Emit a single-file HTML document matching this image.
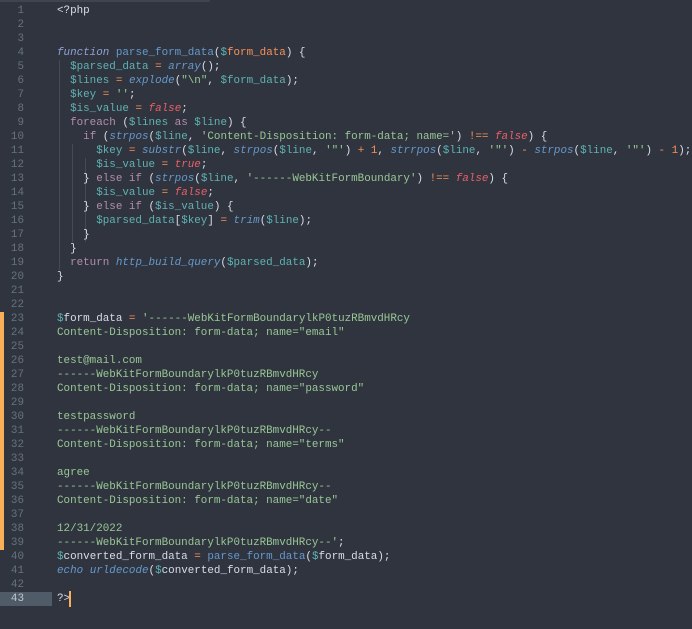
<!DOCTYPE html><html><head><style>
body{margin:0;width:692px;height:629px;overflow:hidden;background:#2f343f;font-family:"Liberation Mono",monospace;font-size:10.9px;color:#d8dee9}
.top{position:absolute;left:0;top:0;width:210px;height:2px;background:#3e4450}
.g{position:absolute;left:0;top:4px;width:40px}
.g div{height:14px;line-height:14px;text-align:right;padding-right:8px;color:#65737e;width:24px}
.c{position:absolute;left:57px;top:4px;width:635px;overflow:hidden}
.c div{height:14px;line-height:14px;white-space:pre}
.k{color:#b48ead}.f{color:#6699cc}.i{font-style:italic}.v{color:#5fb3b3}.s{color:#99c794}.o{color:#f99157}.r{color:#ec5f67;font-style:italic}
.bar{position:absolute;left:0;top:312px;width:4px;height:238px;background:#f9ae58}
.hl{position:absolute;left:0;top:592px;width:52px;height:14px;background:#4f5b66}
.cur{position:absolute;left:69px;top:591px;width:2px;height:16px;background:#f9ae58}
.ig{position:absolute;width:1px;background:#454b56}
</style></head><body>
<div class="top"></div><div class="bar"></div><div class="hl"></div>
<div class="ig" style="left:59px;top:60px;height:210px"></div>
<div class="ig" style="left:72px;top:144px;height:98px"></div>
<div class="ig" style="left:85px;top:158px;height:84px"></div>
<div class="g">
<div>1</div><div>2</div><div>3</div><div>4</div><div>5</div><div>6</div><div>7</div><div>8</div><div>9</div><div>10</div><div>11</div><div>12</div><div>13</div><div>14</div><div>15</div><div>16</div><div>17</div><div>18</div><div>19</div><div>20</div><div>21</div><div>22</div><div>23</div><div>24</div><div>25</div><div>26</div><div>27</div><div>28</div><div>29</div><div>30</div><div>31</div><div>32</div><div>33</div><div>34</div><div>35</div><div>36</div><div>37</div><div>38</div><div>39</div><div>40</div><div>41</div><div>42</div><div style="color:#c0c5ce">43</div>
</div>
<div class="c">
<div>&lt;?php</div><div></div><div></div>
<div><span class="f i" style="color:#8fa1d4">function</span> <span class="f">parse_form_data</span>(<span class="v">$</span><span class="o">form_data</span>) {</div>
<div>  <span class="v">$parsed_data</span> <span class="o">=</span> <span class="f i">array</span>();</div>
<div>  <span class="v">$lines</span> <span class="o">=</span> <span class="f i">explode</span>(<span class="s">"\n"</span>, <span class="v">$form_data</span>);</div>
<div>  <span class="v">$key</span> <span class="o">=</span> <span class="s">''</span>;</div>
<div>  <span class="v">$is_value</span> <span class="o">=</span> <span class="r">false</span>;</div>
<div>  <span class="k">foreach</span> (<span class="v">$lines</span> <span class="k">as</span> <span class="v">$line</span>) {</div>
<div>    <span class="k">if</span> (<span class="f i">strpos</span>(<span class="v">$line</span>, <span class="s">'Content-Disposition: form-data; name='</span>) <span class="o">!==</span> <span class="r">false</span>) {</div>
<div>      <span class="v">$key</span> <span class="o">=</span> <span class="f i">substr</span>(<span class="v">$line</span>, <span class="f i">strpos</span>(<span class="v">$line</span>, <span class="s">'"'</span>) <span class="o">+</span> <span class="o">1</span>, <span class="f i">strrpos</span>(<span class="v">$line</span>, <span class="s">'"'</span>) <span class="o">-</span> <span class="f i">strpos</span>(<span class="v">$line</span>, <span class="s">'"'</span>) <span class="o">-</span> <span class="o">1</span>);</div>
<div>      <span class="v">$is_value</span> <span class="o">=</span> <span class="r">true</span>;</div>
<div>    } <span class="k">else if</span> (<span class="f i">strpos</span>(<span class="v">$line</span>, <span class="s">'------WebKitFormBoundary'</span>) <span class="o">!==</span> <span class="r">false</span>) {</div>
<div>      <span class="v">$is_value</span> <span class="o">=</span> <span class="r">false</span>;</div>
<div>    } <span class="k">else if</span> (<span class="v">$is_value</span>) {</div>
<div>      <span class="v">$parsed_data</span>[<span class="v">$key</span>] <span class="o">=</span> <span class="f i">trim</span>(<span class="v">$line</span>);</div>
<div>    }</div>
<div>  }</div>
<div>  <span class="k">return</span> <span class="f i">http_build_query</span>(<span class="v">$parsed_data</span>);</div>
<div>}</div><div></div><div></div>
<div><span class="v">$</span>form_data <span class="o">=</span> <span class="s">'------WebKitFormBoundarylkP0tuzRBmvdHRcy</span></div>
<div class="s">Content-Disposition: form-data; name="email"</div>
<div></div>
<div class="s">test@mail.com</div>
<div class="s">------WebKitFormBoundarylkP0tuzRBmvdHRcy</div>
<div class="s">Content-Disposition: form-data; name="password"</div>
<div></div>
<div class="s">testpassword</div>
<div class="s">------WebKitFormBoundarylkP0tuzRBmvdHRcy--</div>
<div class="s">Content-Disposition: form-data; name="terms"</div>
<div></div>
<div class="s">agree</div>
<div class="s">------WebKitFormBoundarylkP0tuzRBmvdHRcy--</div>
<div class="s">Content-Disposition: form-data; name="date"</div>
<div></div>
<div class="s">12/31/2022</div>
<div><span class="s">------WebKitFormBoundarylkP0tuzRBmvdHRcy--'</span>;</div>
<div><span class="v">$</span>converted_form_data <span class="o">=</span> <span class="f">parse_form_data</span>(<span class="v">$</span>form_data);</div>
<div><span class="f i">echo</span> <span class="f i">urldecode</span>(<span class="v">$</span>converted_form_data);</div>
<div></div>
<div>?&gt;</div>
</div>
<div class="cur"></div>
</body></html>
